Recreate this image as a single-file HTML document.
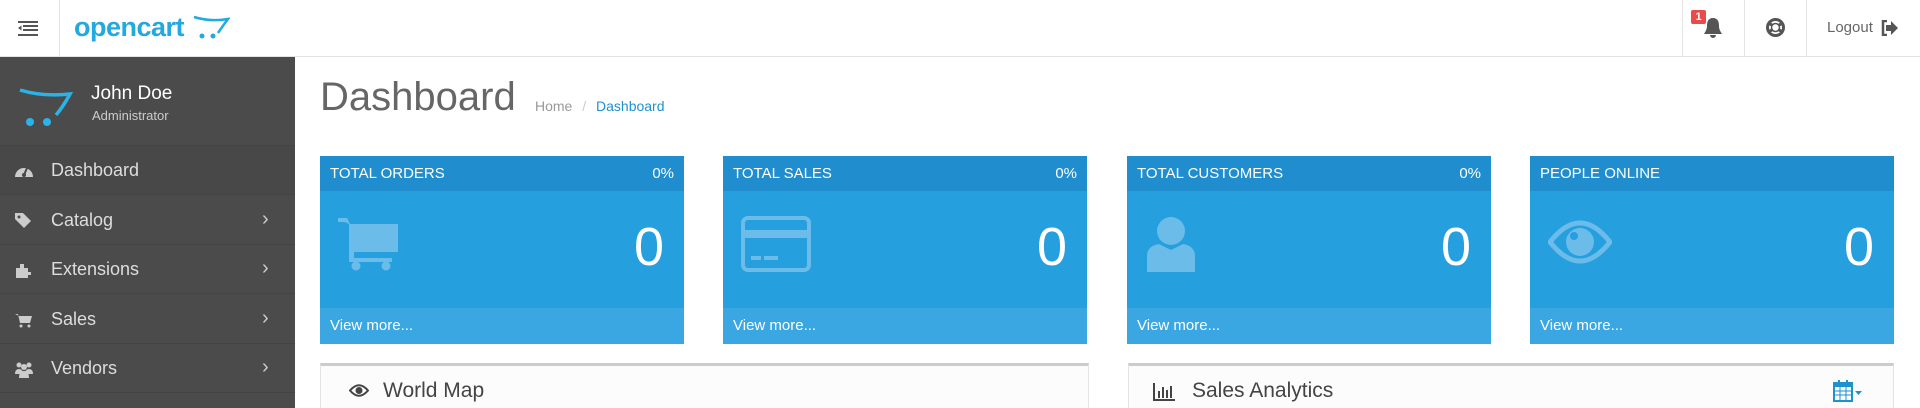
<!DOCTYPE html>
<html><head><meta charset="utf-8"><style>
*{margin:0;padding:0;box-sizing:border-box}
body{width:1920px;height:408px;overflow:hidden;background:#fff;font-family:"Liberation Sans",sans-serif;position:relative}
.abs{position:absolute}
#hdr{left:0;top:0;width:1920px;height:57px;border-bottom:1px solid #e3e3e3;background:#fff}
#side{left:0;top:57px;width:295px;height:351px;background:#4b4b4b}
.mi{position:absolute;left:0;width:295px;height:49px;border-bottom:1px solid #444;color:#ddd;font-size:18px}
.mi .t{position:absolute;left:51px;top:14px}
.mi .ic{position:absolute;left:14px;top:15px;width:20px;height:20px}
.mi .ch{position:absolute;left:262px;top:12px;font-size:20px;color:#ccc}
.card{position:absolute;top:156px;width:364px;height:188px;background:#269fdf;color:#fff}
.card .h{height:35px;background:#1f8dce;font-size:15px;padding:9px 10px}
.card .h span{float:right}
.card .n{position:absolute;right:20px;top:60px;font-size:54px}
.card .f{position:absolute;left:0;bottom:0;width:100%;height:36px;background:#3aa6e2;font-size:15px;padding:9px 10px}
.card svg{position:absolute;left:18px;top:60px}
.pnl{position:absolute;top:363px;height:45px;border-top:3px solid #ccc;border-left:1px solid #e4e4e4;border-right:1px solid #e4e4e4;background:#fcfcfc;font-size:21px;color:#444}
</style></head><body>
<div id="hdr" class="abs">
 <div class="abs" style="left:0;top:0;width:60px;height:56px;border-right:1px solid #e3e3e3"></div>
 <svg class="abs" style="left:18px;top:21px" width="20" height="15" viewBox="0 0 20 15"><g fill="#555"><rect x="0" y="0" width="20" height="2"/><rect x="5" y="4" width="15" height="2"/><rect x="5" y="8" width="15" height="2"/><rect x="0" y="13" width="20" height="2"/><path d="M0 7 L3.5 4.5 V9.5Z"/></g></svg>
 <div class="abs" style="left:74px;top:12px;font-size:27px;font-weight:bold;color:#23a8e0;letter-spacing:-0.5px">opencart</div>
 <svg class="abs" style="left:192px;top:14px" width="38" height="25" viewBox="0 0 38 25"><path d="M2 3 Q18 8 36 5 Q30 13 26 19" stroke="#23a8e0" stroke-width="2.5" fill="none"/><circle cx="10" cy="22" r="2.5" fill="#23a8e0"/><circle cx="21" cy="22" r="2.5" fill="#23a8e0"/></svg>
 <div class="abs" style="left:1682px;top:0;width:1px;height:56px;background:#e3e3e3"></div>
 <div class="abs" style="left:1744px;top:0;width:1px;height:56px;background:#e3e3e3"></div>
 <div class="abs" style="left:1806px;top:0;width:1px;height:56px;background:#e3e3e3"></div>
 <svg class="abs" style="left:1704px;top:17px" width="18" height="21" viewBox="0 0 18 21"><path d="M9 1 C4 1 3 5 3 9 C3 13 1 15 0 17 H18 C17 15 15 13 15 9 C15 5 14 1 9 1Z M6 18 A3 3 0 0 0 12 18Z" fill="#555"/></svg>
 <div class="abs" style="left:1691px;top:10px;width:15px;height:14px;background:#e94b4b;color:#fff;font-size:11px;font-weight:bold;text-align:center;line-height:14px;border-radius:2px">1</div>
 <svg class="abs" style="left:1765px;top:17px" width="21" height="21" viewBox="0 0 21 21"><circle cx="10.5" cy="10.5" r="8" stroke="#555" stroke-width="3" fill="none"/><circle cx="10.5" cy="10.5" r="4" stroke="#555" stroke-width="1.5" fill="none"/><path d="M3 6 L7 8 M18 6 L14 8 M3 15 L7 13 M18 15 L14 13" stroke="#555" stroke-width="3"/></svg>
 <div class="abs" style="left:1827px;top:19px;font-size:15px;color:#666">Logout</div>
 <svg class="abs" style="left:1881px;top:20px" width="17" height="16" viewBox="0 0 17 16"><path d="M6 1 H2 V15 H6" stroke="#555" stroke-width="2.5" fill="none"/><path d="M5 5 H10 V1 L17 8 L10 15 V11 H5Z" fill="#555"/></svg>
</div>
<div id="side" class="abs">
 <svg class="abs" style="left:18px;top:30px" width="56" height="40" viewBox="0 0 56 40"><path d="M2 3 Q25 10 52 7 Q45 20 38 28" stroke="#2ab3e8" stroke-width="3.5" fill="none"/><circle cx="12" cy="35" r="4" fill="#2ab3e8"/><circle cx="29" cy="35" r="4" fill="#2ab3e8"/></svg>
 <div class="abs" style="left:91px;top:26px;font-size:19px;color:#fff">John Doe</div>
 <div class="abs" style="left:92px;top:51px;font-size:13px;color:#ccc">Administrator</div>
 <div class="abs" style="left:0;top:88px;width:295px;height:1px;background:#444"></div>
 <div class="mi" style="top:89px;background:#484848"><svg class="ic" viewBox="0 0 20 20"><path d="M1 16 A9 9 0 1 1 19 16Z" fill="#ccc"/><circle cx="10" cy="14" r="2" fill="#484848"/><path d="M10 14 L13 7" stroke="#484848" stroke-width="2"/></svg><span class="t">Dashboard</span></div>
 <div class="mi" style="top:139px"><svg class="ic" viewBox="0 0 20 20"><path d="M1 2 H9 L17 10 L10 17 L1 8Z" fill="#ccc"/><circle cx="5" cy="6" r="1.5" fill="#4b4b4b"/></svg><span class="t">Catalog</span><span class="ch">›</span></div>
 <div class="mi" style="top:188px"><svg class="ic" viewBox="0 0 20 20"><path d="M2 8 H6 V4 H10 V8 H14 V12 H17 V15 H14 V18 H2Z" fill="#ccc"/></svg><span class="t">Extensions</span><span class="ch">›</span></div>
 <div class="mi" style="top:238px"><svg class="ic" viewBox="0 0 20 20"><path d="M1 4 H4 L6 13 H16 L18 6 H5" fill="#ccc"/><circle cx="7" cy="16" r="1.5" fill="#ccc"/><circle cx="15" cy="16" r="1.5" fill="#ccc"/></svg><span class="t">Sales</span><span class="ch">›</span></div>
 <div class="mi" style="top:287px"><svg class="ic" viewBox="0 0 20 20"><circle cx="5" cy="6" r="2.5" fill="#ccc"/><circle cx="15" cy="6" r="2.5" fill="#ccc"/><circle cx="10" cy="8" r="3" fill="#ccc"/><path d="M1 15 Q1 10 5 10 Q9 10 9 15Z M11 15 Q11 10 15 10 Q19 10 19 15Z M5 19 Q5 12 10 12 Q15 12 15 19Z" fill="#ccc"/></svg><span class="t">Vendors</span><span class="ch">›</span></div>
</div>
<div class="abs" style="left:320px;top:75px;font-size:40px;color:#666">Dashboard</div>
<div class="abs" style="left:535px;top:98px;font-size:14px;color:#999">Home <span style="color:#ccc;margin:0 6px">/</span> <span style="color:#1e91cf">Dashboard</span></div>

<div class="card" style="left:320px"><div class="h">TOTAL ORDERS<span>0%</span></div>
 <svg width="60" height="55" viewBox="0 0 60 55"><path d="M0 2 H9 L12 8 H60 V36 H16 L16 42 H54 V46 H11 V8 L7 6 H0Z M12 10 H56 V32 H14Z" fill="#6bbce9"/><path d="M12 8 H58 V34 H14Z" fill="#6bbce9"/><circle cx="18" cy="50" r="4.5" fill="#6bbce9"/><circle cx="48" cy="50" r="4.5" fill="#6bbce9"/></svg>
 <div class="n">0</div><div class="f">View more...</div></div>
<div class="card" style="left:723px"><div class="h">TOTAL SALES<span>0%</span></div>
 <svg width="70" height="56" viewBox="0 0 70 56"><rect x="2" y="2" width="66" height="52" rx="5" stroke="#6bbce9" stroke-width="4" fill="none"/><rect x="2" y="14" width="66" height="8" fill="#6bbce9"/><rect x="10" y="40" width="10" height="4" fill="#6bbce9"/><rect x="23" y="40" width="14" height="4" fill="#6bbce9"/></svg>
 <div class="n">0</div><div class="f">View more...</div></div>
<div class="card" style="left:1127px"><div class="h">TOTAL CUSTOMERS<span>0%</span></div>
 <svg width="52" height="56" viewBox="0 0 52 56"><circle cx="26" cy="15" r="14" fill="#6bbce9"/><path d="M2 56 V40 Q2 30 14 28 L26 34 L38 28 Q50 30 50 40 V56Z" fill="#6bbce9"/></svg>
 <div class="n">0</div><div class="f">View more...</div></div>
<div class="card" style="left:1530px"><div class="h">PEOPLE ONLINE</div>
 <svg width="64" height="44" viewBox="0 0 64 44" style="top:64px"><path d="M2 22 Q32 -16 62 22 Q32 60 2 22Z" stroke="#6bbce9" stroke-width="5" fill="none"/><circle cx="32" cy="22" r="14" fill="#6bbce9"/><circle cx="26" cy="16" r="4" fill="#269fdf"/></svg>
 <div class="n">0</div><div class="f">View more...</div></div>

<div class="pnl" style="left:320px;width:769px"><svg class="abs" style="left:28px;top:18px" width="20" height="13" viewBox="0 0 20 13"><path d="M1 6.5 Q10 -4 19 6.5 Q10 17 1 6.5Z" stroke="#444" stroke-width="2" fill="none"/><circle cx="10" cy="6.5" r="3.5" fill="#444"/></svg><span class="abs" style="left:62px;top:13px">World Map</span></div>
<div class="pnl" style="left:1128px;width:766px"><svg class="abs" style="left:24px;top:17px" width="22" height="18" viewBox="0 0 22 18"><path d="M1 0 V17 H22" stroke="#444" stroke-width="2" fill="none"/><rect x="5" y="8" width="2" height="7" fill="#444"/><rect x="9" y="4" width="2" height="11" fill="#444"/><rect x="13" y="7" width="2" height="8" fill="#444"/><rect x="17" y="3" width="2" height="12" fill="#444"/></svg><span class="abs" style="left:63px;top:13px">Sales Analytics</span>
 <svg class="abs" style="left:704px;top:14px" width="30" height="22" viewBox="0 0 30 22"><rect x="1" y="3" width="18" height="18" fill="none" stroke="#1e91cf" stroke-width="2"/><rect x="1" y="3" width="18" height="4" fill="#1e91cf"/><path d="M1 11 H19 M1 15 H19 M7 7 V21 M13 7 V21" stroke="#1e91cf" stroke-width="1"/><rect x="5" y="0" width="2" height="5" fill="#1e91cf"/><rect x="13" y="0" width="2" height="5" fill="#1e91cf"/><path d="M22 11 H29 L25.5 15Z" fill="#1e91cf"/></svg></div>
</body></html>
